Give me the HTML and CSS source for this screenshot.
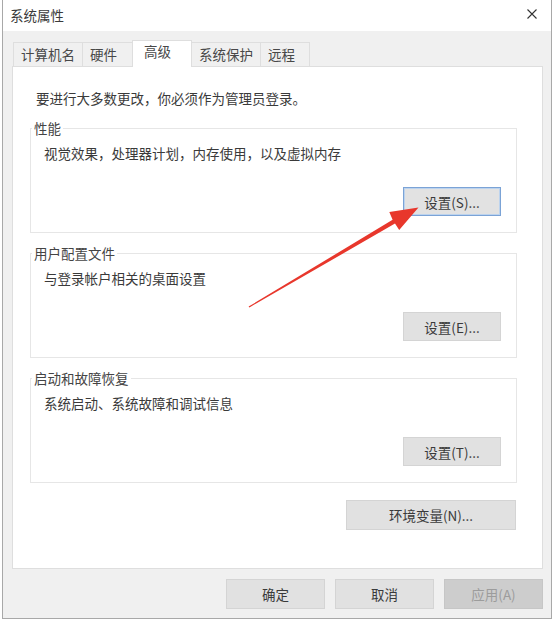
FILE: index.html
```html
<!DOCTYPE html>
<html lang="zh-CN">
<head>
    <meta charset="UTF-8">
    <meta name="viewport" content="width=device-width, initial-scale=1.0">
    <title>系统属性</title>
    <link rel="stylesheet" href="styles.css">
</head>
<body>
    <div class="window">
        <div class="titlebar">
            <span class="title">系统属性</span>
            <svg class="close" width="10" height="10" viewBox="0 0 10 10">
                <path d="M0.5 0.5 L9.5 9.5 M9.5 0.5 L0.5 9.5" stroke="#333" stroke-width="1.1" fill="none"/>
            </svg>
        </div>

        <div class="dialog-body">
            <div class="tabs">
                <div class="tab">计算机名</div>
                <div class="tab">硬件</div>
                <div class="tab active">高级</div>
                <div class="tab">系统保护</div>
                <div class="tab">远程</div>
            </div>

            <div class="panel">
                <p class="intro">要进行大多数更改，你必须作为管理员登录。</p>

                <fieldset class="group">
                    <legend>性能</legend>
                    <p class="desc">视觉效果，处理器计划，内存使用，以及虚拟内存</p>
                    <div class="btn-row">
                        <button class="btn focused">设置(S)...</button>
                    </div>
                </fieldset>

                <fieldset class="group">
                    <legend>用户配置文件</legend>
                    <p class="desc">与登录帐户相关的桌面设置</p>
                    <div class="btn-row">
                        <button class="btn">设置(E)...</button>
                    </div>
                </fieldset>

                <fieldset class="group">
                    <legend>启动和故障恢复</legend>
                    <p class="desc">系统启动、系统故障和调试信息</p>
                    <div class="btn-row">
                        <button class="btn">设置(T)...</button>
                    </div>
                </fieldset>

                <div class="env-row">
                    <button class="btn wide">环境变量(N)...</button>
                </div>
            </div>

            <div class="footer">
                <button class="btn footer-btn">确定</button>
                <button class="btn footer-btn">取消</button>
                <button class="btn footer-btn" disabled>应用(A)</button>
            </div>
        </div>
    </div>

    <!-- red annotation arrow drawn over the dialog -->
    <svg class="arrow" width="554" height="620" viewBox="0 0 554 620">
        <polygon points="248.6,306.6 392.6,219.8 389.3,212.0 418.5,207.5 399.2,230.0 395.0,223.6 249.4,307.4" fill="#e8372c"/>
    </svg>
</body>
</html>
```

FILE: styles.css
```css
body {
    margin: 0;
    background-color: #ffffff;
    font-family: "Noto Sans CJK SC", "Noto Sans", sans-serif;
    font-size: 13.5px;
    line-height: 18px;
    color: #3a3a3a;
    position: relative;
}

.window {
    width: 548px;
    margin-left: 2px;
    border: 1px solid #a8a8a8;
    border-top: none;
    background-color: #f0f0f0;
}

.titlebar {
    height: 31px;
    background-color: #ffffff;
    display: flex;
    align-items: center;
    justify-content: space-between;
    padding: 0 14px 0 7px;
}

.title {
    color: #3a3a3a;
    margin-top: -2px;
}

.close {
    margin-top: -3px;
}

.dialog-body {
    padding: 9px 8px 9px 9px;
}

.tabs {
    display: flex;
    align-items: flex-end;
    height: 26px;
    margin-left: 1px;
}

.tab {
    box-sizing: border-box;
    height: 24px;
    min-width: 50px;
    padding: 2px 7px 0;
    border: 1px solid #dedede;
    border-bottom: none;
    border-right: none;
    background-color: #f0f0f0;
    color: #484848;
}

.tab:last-child {
    border-right: 1px solid #dedede;
}

.tab.active {
    position: relative;
    z-index: 1;
    width: 60px;
    height: 27px;
    margin-bottom: -1px;
    padding: 1px 0 0 11px;
    background-color: #ffffff;
    border-right: 1px solid #dedede;
}

.tab.active + .tab {
    border-left: none;
}

.panel {
    background-color: #ffffff;
    border: 1px solid #dedede;
    padding: 22px 25px 38px 17px;
}

.intro {
    margin: 0 0 12px 6px;
}

.group {
    margin: 0 0 11px 0;
    padding: 7px 15px 16px 12px;
    border: 1px solid #e6e6e6;
    min-width: 0;
}

.group legend {
    margin-left: -11px;
    padding: 0 2px;
    line-height: 18px;
    color: #444;
}

.desc {
    margin: 0;
    padding-left: 1px;
}

.btn-row {
    display: flex;
    justify-content: flex-end;
    margin-top: 25px;
}

.btn {
    box-sizing: border-box;
    width: 98px;
    height: 29px;
    border: 1px solid #d4d4d4;
    background-color: #e1e1e1;
    font-family: "Noto Sans CJK SC", "Noto Sans", sans-serif;
    font-size: 13.5px;
    color: #3a3a3a;
    padding: 0;
}

.btn.focused {
    border: 1px solid #7ba3d6;
    box-shadow: inset 0 0 0 1px #bcd3ee;
    background-color: #e2e2e2;
}

.env-row {
    display: flex;
    justify-content: flex-end;
    margin-top: 17px;
    margin-right: 1px;
}

.btn.wide {
    width: 170px;
    height: 30px;
}

.footer {
    display: flex;
    justify-content: flex-end;
    gap: 10px;
    padding-top: 10px;
}

.footer-btn {
    width: 99px;
    height: 30px;
}

.btn:disabled {
    background-color: #cdcdcd;
    border-color: #c6c6c6;
    color: #9c9c9c;
}

.arrow {
    position: absolute;
    top: 0;
    left: 0;
    pointer-events: none;
}
```
